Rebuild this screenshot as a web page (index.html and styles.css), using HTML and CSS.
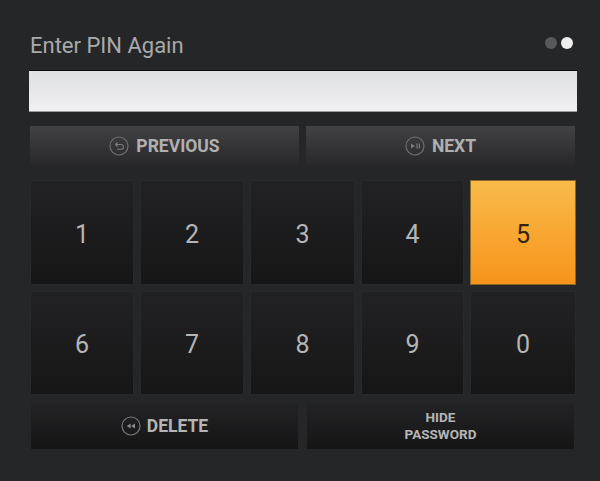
FILE: index.html
```html
<!DOCTYPE html>
<html lang="en">
<head>
    <meta charset="UTF-8">
    <title>Enter PIN</title>
    <link rel="stylesheet" href="styles.css">
</head>
<body>
    <div class="panel">
        <div class="header">
            <p class="title">Enter PIN Again</p>
            <div class="dots">
                <span class="dot"></span>
                <span class="dot dotActive"></span>
            </div>
        </div>
        <div class="pinInput"></div>
        <div class="navRow">
            <button class="navButton">
                <svg class="icon" viewBox="0 0 20 20">
                    <circle cx="10" cy="10" r="9" fill="none" stroke="#6f6f70" stroke-width="1.2"/>
                    <path d="M6.5 8.5h5.5a2.4 2.4 0 0 1 0 4.8H8M8.5 6.5l-2 2 2 2" fill="none" stroke="#7c7c7d" stroke-width="1.1"/>
                </svg>
                PREVIOUS
            </button>
            <button class="navButton">
                <svg class="icon" viewBox="0 0 20 20">
                    <circle cx="10" cy="10" r="9" fill="none" stroke="#6f6f70" stroke-width="1.2"/>
                    <path d="M6 7.5l4 2.5-4 2.5z" fill="#7c7c7d"/>
                    <path d="M11.5 7.5h1.2v5h-1.2zM13.8 7.5H15v5h-1.2z" fill="#7c7c7d"/>
                </svg>
                NEXT
            </button>
        </div>
        <div class="keypad">
            <button class="key">1</button>
            <button class="key">2</button>
            <button class="key">3</button>
            <button class="key">4</button>
            <button class="key keyActive">5</button>
            <button class="key">6</button>
            <button class="key">7</button>
            <button class="key">8</button>
            <button class="key">9</button>
            <button class="key">0</button>
        </div>
        <div class="actionRow">
            <button class="actionButton">
                <svg class="icon" viewBox="0 0 20 20">
                    <circle cx="10" cy="10" r="9" fill="none" stroke="#77777a" stroke-width="1.2"/>
                    <path d="M9.6 7.6v4.8L5.8 10zM14 7.6v4.8L10.2 10z" fill="#8a8a8b"/>
                </svg>
                DELETE
            </button>
            <button class="actionButton actionSmall">HIDE<br>PASSWORD</button>
        </div>
    </div>
</body>
</html>
```

FILE: styles.css
```css
*{
    margin: 0;
    padding: 0;
    box-sizing: border-box;
}
body{
    width: 600px;
    height: 481px;
    overflow: hidden;
    background-color: #252628;
    font-family: Roboto, "Liberation Sans", sans-serif;
}
button{
    border: 0;
    font-family: inherit;
}
.panel{
    padding: 32px 23px 0 29px;
}
.header{
    display: flex;
    justify-content: space-between;
    align-items: center;
    height: 28px;
    padding-left: 1px;
}
.title{
    padding-bottom: 2px;
    font-size: 22px;
    color: #a9aaab;
}
.dots{
    display: flex;
    gap: 4px;
    margin-top: -6px;
    padding-right: 4px;
}
.dot{
    width: 12px;
    height: 12px;
    border-radius: 50%;
    background-color: #58595b;
}
.dotActive{
    background-color: #eeeeef;
}
.pinInput{
    height: 42px;
    margin-top: 10px;
    border-top: 1px solid #0c0c0c;
    border-bottom: 1px solid #9c9c9c;
    background: linear-gradient(#dfe0e1, #f0f0f2);
}
.navRow{
    display: grid;
    grid-template-columns: 269px 269px;
    gap: 7px;
    height: 41px;
    margin-top: 14px;
    padding-left: 1px;
}
.navButton{
    display: flex;
    justify-content: center;
    align-items: center;
    gap: 7px;
    padding-bottom: 1px;
    font-size: 17.5px;
    font-weight: 700;
    color: #b0b0b1;
    background: linear-gradient(#424244, #272729);
}
.icon{
    width: 20px;
    height: 20px;
}
.keypad{
    display: grid;
    grid-template-columns: 102px 102px 103px 101px 104px;
    grid-template-rows: 103px 102px;
    column-gap: 8px;
    row-gap: 8px;
    margin-top: 14px;
    padding-left: 2px;
}
.key{
    padding-top: 3px;
    font-size: 25px;
    color: #b5b5b6;
    background: linear-gradient(#222224, #161617);
    box-shadow: 0 0 0 1px #28292b;
}
.keyActive{
    color: #33240c;
    background: linear-gradient(#f9bb4a, #f7941b);
    box-shadow: 0 0 0 1px #8a6a2a;
}
.actionRow{
    display: grid;
    grid-template-columns: 267px 267px;
    gap: 9px;
    height: 46px;
    margin-top: 9px;
    padding-left: 2px;
}
.actionButton{
    display: flex;
    justify-content: center;
    align-items: center;
    gap: 6px;
    padding-bottom: 1px;
    font-size: 17.5px;
    font-weight: 700;
    color: #b5b5b6;
    background: linear-gradient(#232325, #151516);
}
.actionSmall{
    font-size: 13.5px;
    line-height: 17px;
    text-align: center;
}
```
